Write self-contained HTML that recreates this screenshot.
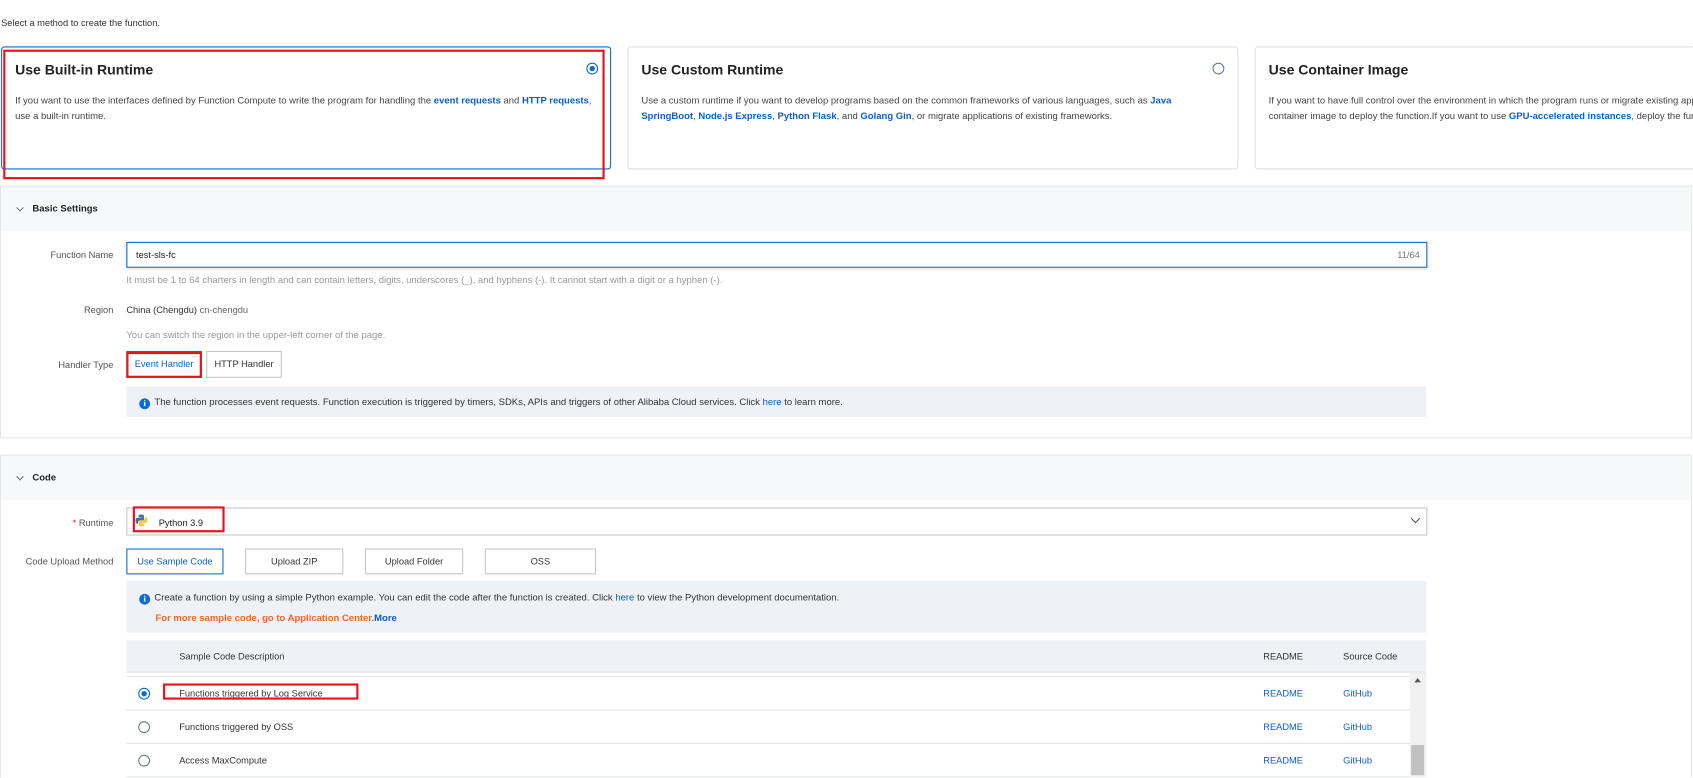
<!DOCTYPE html>
<html><head><meta charset="utf-8"><style>
*{box-sizing:border-box;margin:0;padding:0}
html,body{width:1693px;height:778px;overflow:hidden}
body{background:#fff;font-family:"Liberation Sans",sans-serif;font-size:9px;color:#333;position:relative}
#w{position:absolute;left:0;top:0;width:1568px;height:720px;transform:scale(1.0797);transform-origin:0 0;overflow:hidden}
.a{position:absolute}
.card{position:absolute;top:43px;height:114px;border:1px solid #dcdfe4;border-radius:3px;background:#fff;overflow:hidden}
.card h3{position:absolute;left:12px;top:13px;font-size:13px;font-weight:bold;color:#222}
.card p{position:absolute;left:12px;top:42px;line-height:14px;font-size:8.8px;color:#444;white-space:nowrap}
b.l{color:#0b5fc7}
.radio{position:absolute;width:11px;height:11px;border:1px solid #6d7a8c;border-radius:50%;background:#fff}
.radio.on{border-color:#0b6bd4}
.radio.on:after{content:"";position:absolute;left:2px;top:2px;width:5px;height:5px;border-radius:50%;background:#0b6bd4}
.sec{position:absolute;left:0;width:1567px;border:1px solid #e3e5e8;background:#fff}
.sh{height:41px;background:#f7f8fa;font-weight:bold;font-size:8.8px;line-height:41px;padding-left:29px;position:relative;color:#222}
.sh:before{content:"";position:absolute;left:15px;top:17px;width:4px;height:4px;border-right:1px solid #777;border-bottom:1px solid #777;transform:rotate(45deg)}
.lbl{position:absolute;width:105px;text-align:right;color:#555;font-size:8.6px}
.hint{position:absolute;left:117px;color:#999;font-size:8.8px}
.btn{position:absolute;height:24px;border:1px solid #c4c6cc;background:#fff;text-align:center;line-height:22px;font-size:8.6px;color:#333}
.info{position:absolute;left:117px;width:1204px;background:#eef1f6;font-size:8.8px}
.ic{display:inline-block;width:10px;height:10px;border-radius:50%;background:#0b6bd4;color:#fff;font-size:8px;line-height:10px;text-align:center;font-weight:bold;font-family:"Liberation Serif",serif;vertical-align:-1px;margin-right:4px}
.red{position:absolute;border:2px solid #e8141b}
.row{position:absolute;left:117px;width:1189px;height:31px;border-bottom:1px solid #e3e5e8;font-size:8.6px}
.row span{position:absolute;top:10px}
.lk{color:#0b5fc7}
</style></head><body><div id="w">
<div class="a" style="left:1px;top:16px;font-size:8.6px;color:#333">Select a method to create the function.</div>

<div class="card" style="left:1px;width:565px;border-color:#0b6bd4">
<h3>Use Built-in Runtime</h3><div class="radio on" style="left:541px;top:14px"></div>
<p>If you want to use the interfaces defined by Function Compute to write the program for handling the <b class="l">event requests</b> and <b class="l">HTTP requests</b>,<br>use a built-in runtime.</p></div>
<div class="red" style="left:3px;top:46px;width:557px;height:120px"></div>
<div class="card" style="left:581px;width:566px">
<h3>Use Custom Runtime</h3><div class="radio" style="left:541px;top:14px"></div>
<p>Use a custom runtime if you want to develop programs based on the common frameworks of various languages, such as <b class="l">Java</b><br><b class="l">SpringBoot</b>, <b class="l">Node.js Express</b>, <b class="l">Python Flask</b>, and <b class="l">Golang Gin</b>, or migrate applications of existing frameworks.</p></div>
<div class="card" style="left:1162px;width:560px">
<h3>Use Container Image</h3>
<p>If you want to have full control over the environment in which the program runs or migrate existing applications, use a<br>container image to deploy the function.If you want to use <b class="l">GPU-accelerated instances</b>, deploy the function.</p></div>

<div class="sec" style="top:172px;height:234px">
<div class="sh">Basic Settings</div></div>
<div class="lbl" style="top:231px">Function Name</div>
<div class="a" style="left:117px;top:224px;width:1205px;height:24px;border:1px solid #0b6bd4;box-shadow:0 1px 3px rgba(0,0,0,.15);padding:6px 8px;font-size:8.6px;color:#222">test-sls-fc<span style="position:absolute;right:6px;color:#777">11/64</span></div>
<div class="hint" style="top:254px">It must be 1 to 64 charters in length and can contain letters, digits, underscores (_), and hyphens (-). It cannot start with a digit or a hyphen (-).</div>
<div class="lbl" style="top:282px">Region</div>
<div class="a" style="left:117px;top:282px;font-size:8.6px;color:#333">China (Chengdu) <span style="color:#666">cn-chengdu</span></div>
<div class="hint" style="top:305px">You can switch the region in the upper-left corner of the page.</div>
<div class="lbl" style="top:333px">Handler Type</div>
<div class="btn" style="left:117px;top:325px;width:70px;border-color:#0b6bd4;color:#0b5fc7;height:25px">Event Handler</div>
<div class="btn" style="left:191px;top:325px;width:70px;height:25px">HTTP Handler</div>
<div class="red" style="left:117px;top:326px;width:70px;height:24px"></div>
<div class="info" style="top:358px;height:28px;padding:9px 12px"><span class="ic">i</span>The function processes event requests. Function execution is triggered by timers, SDKs, APIs and triggers of other Alibaba Cloud services. Click <span class="lk">here</span> to learn more.</div>

<div class="sec" style="top:421px;height:310px">
<div class="sh">Code</div></div>
<div class="lbl" style="top:479px"><span style="color:#e8141b">*</span> Runtime</div>
<div class="a" style="left:117px;top:470px;width:1205px;height:26px;border:1px solid #c4c6cc"></div>
<svg class="a" style="left:125px;top:476px" width="12" height="12" viewBox="0 0 12 12"><path d="M6 0.5C3 0.5 3.3 1.8 3.3 1.8v1.4h2.8v.5H2.2S.5 3.5.5 6.3s1.5 2.7 1.5 2.7h.9V7.7s0-1.5 1.5-1.5h2.6s1.4 0 1.4-1.4V2S8.6.5 6 .5z" fill="#3b73a8"/><path d="M6 11.5c3 0 2.7-1.3 2.7-1.3V8.8H5.9v-.5h3.9s1.7.2 1.7-2.6S10 3 10 3h-.9v1.3s0 1.5-1.5 1.5H5s-1.4 0-1.4 1.4V10s-.2 1.5 2.4 1.5z" fill="#f5c93e"/></svg>
<div class="a" style="left:147px;top:479px;font-size:8.6px;color:#222">Python 3.9</div>
<svg class="a" style="left:1306px;top:479px" width="10" height="7"><path d="M1 1l4 4 4-4" fill="none" stroke="#555" stroke-width="1"/></svg>
<div class="red" style="left:123px;top:469px;width:85px;height:24px"></div>
<div class="lbl" style="top:515px">Code Upload Method</div>
<div class="btn" style="left:117px;top:508px;width:90px;border-color:#0b6bd4;color:#0b5fc7">Use Sample Code</div>
<div class="btn" style="left:227px;top:508px;width:91px">Upload ZIP</div>
<div class="btn" style="left:338px;top:508px;width:91px">Upload Folder</div>
<div class="btn" style="left:449px;top:508px;width:103px">OSS</div>
<div class="info" style="top:538px;height:48px;padding:6px 12px;line-height:19px"><span class="ic">i</span>Create a function by using a simple Python example. You can edit the code after the function is created. Click <span class="lk">here</span> to view the Python development documentation.<br><b style="color:#f5671f;margin-left:15px">For more sample code, go to Application Center.</b><b class="lk">More</b></div>
<div class="a" style="left:117px;top:593px;width:1204px;height:30px;background:#eef1f6;border-bottom:1px solid #e0e3e8;font-size:8.6px"><span class="a" style="left:49px;top:10px">Sample Code Description</span><span class="a" style="left:1053px;top:10px">README</span><span class="a" style="left:1127px;top:10px">Source Code</span></div>
<div class="a" style="left:117px;top:626px;width:1189px;border-top:1px solid #e3e5e8"></div>
<div class="row" style="top:627px"><div class="radio on" style="left:11px;top:10px"></div><span style="left:49px">Functions triggered by Log Service</span><span class="lk" style="left:1053px">README</span><span class="lk" style="left:1127px">GitHub</span></div>
<div class="red" style="left:151px;top:633px;width:181px;height:15px"></div>
<div class="row" style="top:658px"><div class="radio" style="left:11px;top:10px"></div><span style="left:49px">Functions triggered by OSS</span><span class="lk" style="left:1053px">README</span><span class="lk" style="left:1127px">GitHub</span></div>
<div class="row" style="top:689px"><div class="radio" style="left:11px;top:10px"></div><span style="left:49px">Access MaxCompute</span><span class="lk" style="left:1053px">README</span><span class="lk" style="left:1127px">GitHub</span></div>
<div class="a" style="left:1306px;top:623px;width:15px;height:97px;background:#f1f1f1"></div>
<div class="a" style="left:1310px;top:628px;width:0;height:0;border-left:3px solid transparent;border-right:3px solid transparent;border-bottom:4px solid #555"></div>
<div class="a" style="left:1307px;top:690px;width:12px;height:28px;background:#c1c1c1"></div>
</div></body></html>
